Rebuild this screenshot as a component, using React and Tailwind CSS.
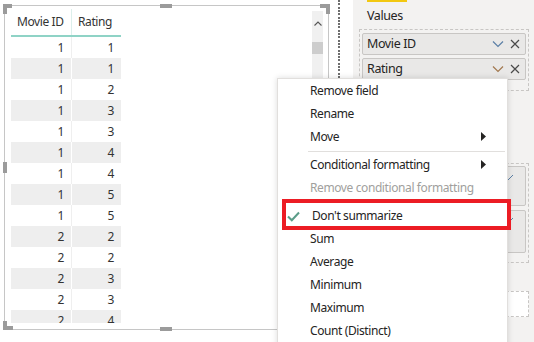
import React from 'react';

const rows = [
  [1, 1], [1, 1], [1, 2], [1, 3], [1, 3], [1, 4], [1, 4],
  [1, 5], [1, 5], [2, 2], [2, 2], [2, 3], [2, 3], [2, 4]
];

const Chevron = ({ color }) => (
  <svg width="12" height="8" viewBox="0 0 12 8">
    <path d="M1 1.5 L6 6.5 L11 1.5" fill="none" stroke={color} strokeWidth="1.2" />
  </svg>
);

const Cross = () => (
  <svg width="10" height="10" viewBox="0 0 10 10">
    <path d="M1 1 L9 9 M9 1 L1 9" fill="none" stroke="#4a4a4a" strokeWidth="1.2" />
  </svg>
);

const Arrow = () => (
  <svg width="5" height="9" viewBox="0 0 5 9">
    <path d="M0 0 L5 4.5 L0 9 Z" fill="#252423" />
  </svg>
);

const MenuItem = ({ label, arrow, disabled, checked }) => (
  <div className={`h-[23px] flex items-center relative ${checked ? 'pl-[34px]' : 'pl-[32px]'} pr-[21px] ${disabled ? 'text-[#a19f9d]' : 'text-[#252423]'}`}>
    {checked && (
      <svg className="absolute left-[9px] top-[7px]" width="13" height="11" viewBox="0 0 13 11">
        <path d="M1 5.5 L4.8 9.3 L12 1.5" fill="none" stroke="#5b9d89" strokeWidth="2" />
      </svg>
    )}
    <span>{label}</span>
    {arrow && <span className="ml-auto"><Arrow /></span>}
  </div>
);

const Separator = () => <div className="ml-[30px] mr-[2px] mt-[3px] mb-[1px] h-px bg-[#e1dfdd]" />;

export default function App() {
  return (
    <div className="relative w-[534px] h-[342px] overflow-hidden bg-white flex font-['Noto_Sans',sans-serif] text-[12px] tracking-[-0.4px] text-[#333]">
      {/* canvas */}
      <div className="w-[338px] h-full pl-[4px] pt-[5px] shrink-0">
        <div className="w-[325px] h-[325px] border border-[#c6c6c6] flex justify-between">
          <div className="ml-[6px] mt-[3px] w-[110px] h-[314px] overflow-hidden">
            <div className="flex h-[28px] border-b-2 border-[#8fd3c6]">
              <div className="w-[61px] pl-[6px] flex items-center border-r border-[#dcefeb]">Movie ID</div>
              <div className="w-[49px] pl-[6px] flex items-center">Rating</div>
            </div>
            {rows.map((r, i) => (
              <div key={i} className={`flex h-[21px] ${i % 2 === 1 ? 'bg-[#eeeeee]' : 'bg-white'}`}>
                <div className={`w-[61px] pr-[7px] flex items-center justify-end border-r ${i % 2 === 1 ? 'border-white' : 'border-[#efefef]'}`}>{r[0]}</div>
                <div className="w-[49px] pr-[7px] flex items-center justify-end">{r[1]}</div>
              </div>
            ))}
          </div>
          <div className="mt-[5px] mr-[5px] w-[11px] h-[311px] bg-[#f0f0f0] flex flex-col items-center">
            <svg className="mt-[10px]" width="8" height="5" viewBox="0 0 8 5">
              <path d="M0.5 4.5 L4 1 L7.5 4.5" fill="none" stroke="#555" strokeWidth="1.1" />
            </svg>
            <div className="mt-[16px] w-full h-[12px] bg-[#cdcdcd]" />
          </div>
        </div>
      </div>

      {/* dotted divider */}
      <div className="w-[2px] h-full shrink-0 bg-[repeating-linear-gradient(to_bottom,#6e6e6e_0_2px,transparent_2px_3.3px)]" />
      <div className="w-[13px] shrink-0" />

      {/* fields pane */}
      <div className="flex-1 h-full bg-[#f3f2f1] px-[6px] text-[#252423]">
        <div className="ml-[8px] w-[40px] h-[2px] bg-[#f2c811]" />
        <div className="ml-[8px] mt-[6px] text-[12.5px] leading-[16px]">Values</div>
        <div className="mt-[5px] w-[170px] h-[62px] border border-dashed border-[#c8c6c4] px-[2px] pt-[3px] flex flex-col gap-[3px]">
          <div className="h-[22px] bg-[#e9e8e7] border border-[#c8c6c4] rounded-[2px] flex items-center pl-[4px] pr-[5px] gap-[6px] text-[12.5px]">
            <span className="flex-1">Movie ID</span>
            <Chevron color="#5b7fa6" />
            <Cross />
          </div>
          <div className="h-[22px] bg-[#e9e8e7] border border-[#c8c6c4] rounded-[2px] flex items-center pl-[4px] pr-[5px] gap-[6px] text-[12.5px]">
            <span className="flex-1">Rating</span>
            <Chevron color="#a2784f" />
            <Cross />
          </div>
        </div>
        <div className="mt-[72px] w-[170px] h-[100px] border border-dashed border-[#c8c6c4] px-[2px] pt-[2px] flex flex-col gap-[4px]">
          <div className="h-[40px] bg-[#e9e8e7] border border-[#c8c6c4] rounded-[2px] flex justify-end pr-[12px] pt-[8px]">
            <svg width="6" height="6" viewBox="0 0 6 6"><path d="M0 6 L6 0" stroke="#5b7fa6" strokeWidth="1" /></svg>
          </div>
          <div className="h-[43px] bg-[#e9e8e7] border border-[#c8c6c4] rounded-[2px] flex justify-end pr-[12px] pt-[7px]">
            <svg width="6" height="6" viewBox="0 0 6 6"><path d="M0 6 L6 0" stroke="#5b7fa6" strokeWidth="1" /></svg>
          </div>
        </div>
        <div className="mt-[28px] w-[170px] h-[26px] border border-dashed border-[#c8c6c4] bg-white" />
      </div>

      {/* selection handles */}
      <div className="absolute left-[3px] top-[4px] w-[9px] h-[4px] bg-[#9b9b9b]" />
      <div className="absolute left-[3px] top-[4px] w-[4px] h-[10px] bg-[#9b9b9b]" />
      <div className="absolute left-[160px] top-[4px] w-[12px] h-[4px] bg-[#9b9b9b]" />
      <div className="absolute left-[320px] top-[4px] w-[10px] h-[4px] bg-[#9b9b9b]" />
      <div className="absolute left-[326px] top-[4px] w-[4px] h-[10px] bg-[#9b9b9b]" />
      <div className="absolute left-[3px] top-[162px] w-[4px] h-[11px] bg-[#9b9b9b]" />
      <div className="absolute left-[3px] top-[326px] w-[10px] h-[4px] bg-[#9b9b9b]" />
      <div className="absolute left-[3px] top-[321px] w-[4px] h-[9px] bg-[#9b9b9b]" />
      <div className="absolute left-[160px] top-[327px] w-[12px] h-[4px] bg-[#9b9b9b]" />

      {/* context menu */}
      <div className="absolute left-[277px] top-[78px] w-[231px] h-[280px] bg-white border border-[#e1dfdd] shadow-[0_0_6px_rgba(0,0,0,0.14)]">
        <MenuItem label="Remove field" />
        <MenuItem label="Rename" />
        <MenuItem label="Move" arrow />
        <Separator />
        <MenuItem label="Conditional formatting" arrow />
        <MenuItem label="Remove conditional formatting" disabled />
        <Separator />
        <MenuItem label="Don't summarize" checked />
        <MenuItem label="Sum" />
        <MenuItem label="Average" />
        <MenuItem label="Minimum" />
        <MenuItem label="Maximum" />
        <MenuItem label="Count (Distinct)" />
      </div>

      {/* highlight annotation */}
      <div className="absolute left-[282px] top-[199px] w-[229px] h-[31px] border-[4px] border-[#ec1c24]" />
    </div>
  );
}
